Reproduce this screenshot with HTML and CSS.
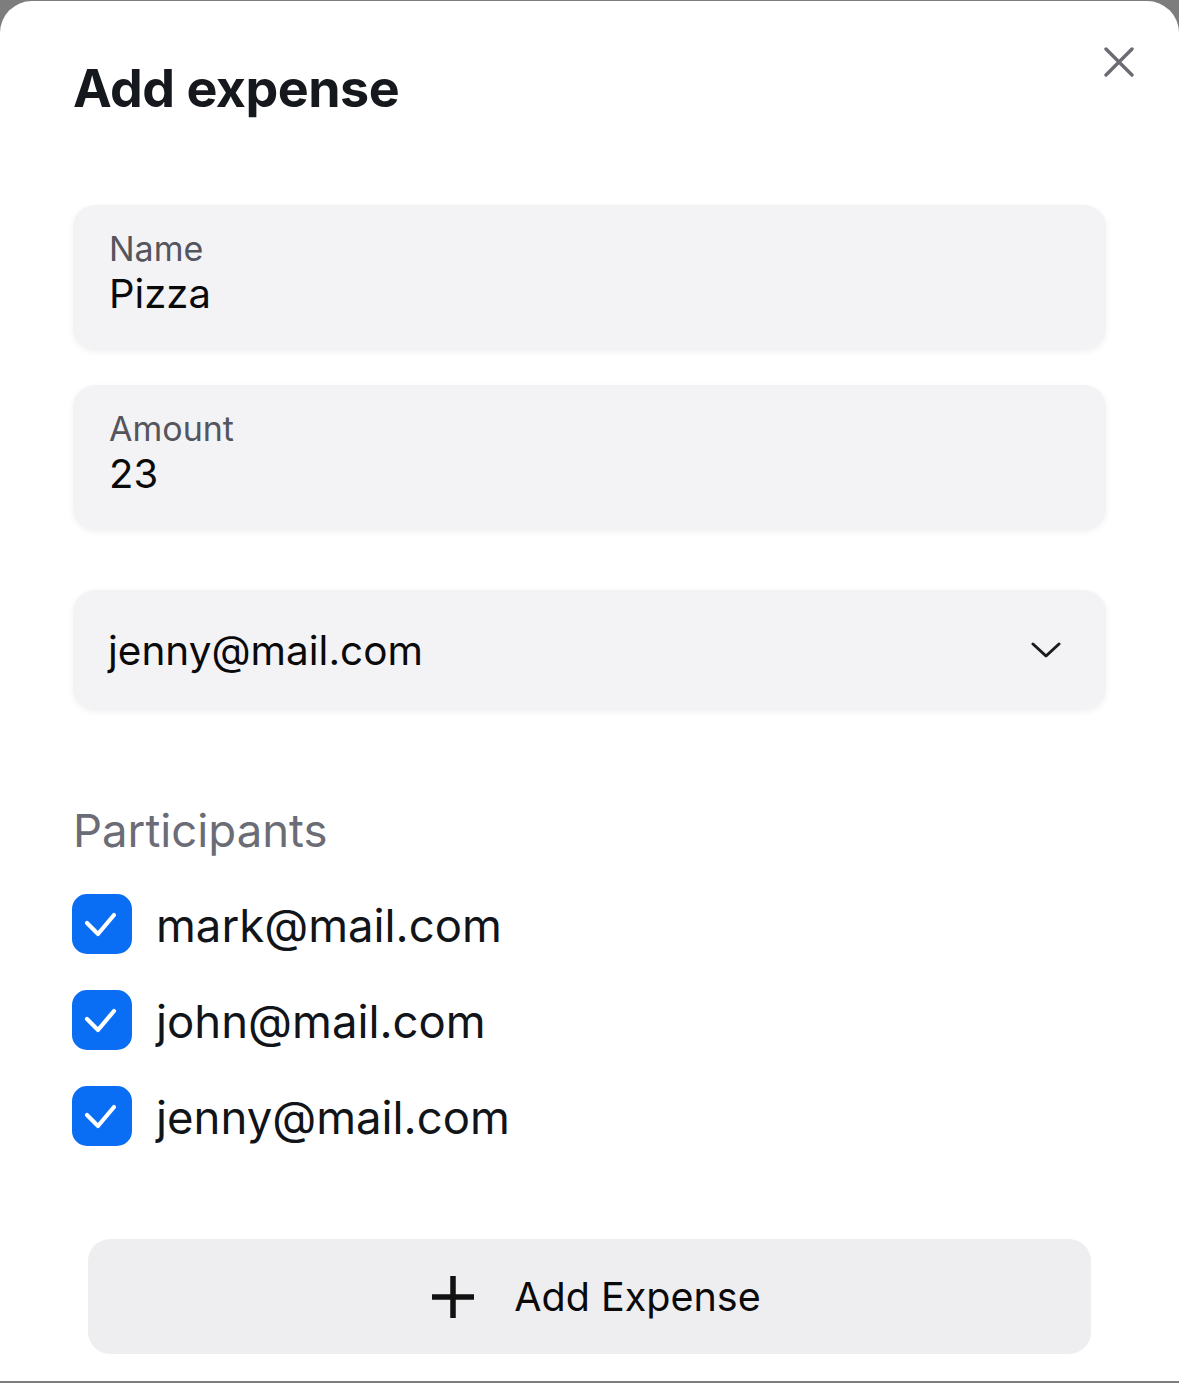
FILE: index.html
```html
<!DOCTYPE html>
<html lang="en">
<head>
    <meta charset="UTF-8" />
    <meta name="viewport" content="width=device-width, initial-scale=1.0" />
    <title>Add expense</title>
    <link rel="stylesheet" href="styles.css">
</head>
<body>
    <div class="sheet">
        <div class="sheet-header">
            <h1 class="title">Add expense</h1>
            <button class="close-btn" aria-label="Close">
                <svg width="30" height="30" viewBox="0 0 30 30">
                    <path d="M2 2 L28 28 M28 2 L2 28" stroke="#6b6b73" stroke-width="3.4" stroke-linecap="round" fill="none" />
                </svg>
            </button>
        </div>

        <div class="field">
            <span class="field-label">Name</span>
            <span class="field-value">Pizza</span>
        </div>

        <div class="field">
            <span class="field-label">Amount</span>
            <span class="field-value">23</span>
        </div>

        <div class="select">
            <span class="select-value">jenny@mail.com</span>
            <svg class="chevron" width="30" height="16" viewBox="0 0 30 16">
                <path d="M2 2 L15 14 L28 2" stroke="#1c1c1e" stroke-width="3" stroke-linecap="round" stroke-linejoin="round" fill="none" />
            </svg>
        </div>

        <div class="participants">
            <div class="section-title">Participants</div>

            <div class="check-row">
                <span class="checkbox">
                    <svg width="60" height="60" viewBox="0 0 60 60">
                        <path d="M15 29 L26 40 L42 21" stroke="#fff" stroke-width="4.2" stroke-linecap="round" stroke-linejoin="round" fill="none" />
                    </svg>
                </span>
                <span class="check-label">mark@mail.com</span>
            </div>

            <div class="check-row">
                <span class="checkbox">
                    <svg width="60" height="60" viewBox="0 0 60 60">
                        <path d="M15 29 L26 40 L42 21" stroke="#fff" stroke-width="4.2" stroke-linecap="round" stroke-linejoin="round" fill="none" />
                    </svg>
                </span>
                <span class="check-label">john@mail.com</span>
            </div>

            <div class="check-row">
                <span class="checkbox">
                    <svg width="60" height="60" viewBox="0 0 60 60">
                        <path d="M15 29 L26 40 L42 21" stroke="#fff" stroke-width="4.2" stroke-linecap="round" stroke-linejoin="round" fill="none" />
                    </svg>
                </span>
                <span class="check-label">jenny@mail.com</span>
            </div>
        </div>

        <button class="add-btn">
            <svg width="42" height="42" viewBox="0 0 42 42">
                <path d="M21 0 V42 M0 21 H42" stroke="#111" stroke-width="5.5" fill="none" />
            </svg>
            <span>Add Expense</span>
        </button>
    </div>
</body>
</html>
```

FILE: styles.css
```css
* {
    box-sizing: border-box;
}

body {
    margin: 0;
    padding: 0;
    font-family: 'Inter', 'Noto Sans', sans-serif;
    background-color: #7d7d7d;
    height: 1383px;
    overflow: hidden;
}

.sheet {
    margin-top: 1px;
    height: 1380px;
    background-color: #fff;
    border-radius: 32px 32px 0 0;
    padding: 0 73px 0 73px;
    display: flex;
    flex-direction: column;
}

.sheet-header {
    display: flex;
    justify-content: space-between;
    align-items: flex-start;
    padding-top: 62px;
    margin-right: -28px;
}

.title {
    margin: 0;
    font-size: 52px;
    line-height: 52px;
    font-weight: 700;
    letter-spacing: -0.01em;
    color: #15181c;
}

.close-btn {
    margin-top: -16px;
    padding: 0;
    border: none;
    background: none;
    width: 30px;
    height: 30px;
    cursor: pointer;
}

.close-btn svg {
    display: block;
}

.field {
    margin-top: 90px;
    height: 145px;
    background-color: #f3f3f6;
    border-radius: 22px;
    box-shadow: 0 2px 6px rgba(0, 0, 0, 0.06);
    padding: 27px 36px 0 36px;
    display: flex;
    flex-direction: column;
}

.field + .field {
    margin-top: 35px;
}

.field-label {
    font-size: 34px;
    line-height: 34px;
    color: #55555e;
}

.field-value {
    margin-top: 8px;
    font-size: 40px;
    line-height: 40px;
    color: #0a0a0a;
}

.select {
    margin-top: 60px;
    height: 120px;
    background-color: #f3f3f6;
    border-radius: 22px;
    box-shadow: 0 2px 6px rgba(0, 0, 0, 0.06);
    padding: 0 45px 0 35px;
    display: flex;
    align-items: center;
    justify-content: space-between;
}

.select-value {
    font-size: 40.5px;
    line-height: 41px;
    color: #0a0a0a;
}

.chevron {
    display: block;
}

.participants {
    margin-top: 98px;
    display: flex;
    flex-direction: column;
    gap: 36px;
}

.section-title {
    margin-bottom: 4px;
    font-size: 45.5px;
    line-height: 46px;
    color: #6c6c76;
}

.check-row {
    display: flex;
    align-items: center;
    gap: 24px;
    margin-left: -1px;
}

.checkbox {
    width: 60px;
    height: 60px;
    border-radius: 15px;
    background-color: #0a6ef4;
    flex-shrink: 0;
}

.checkbox svg {
    display: block;
}

.check-label {
    font-size: 45.5px;
    line-height: 46px;
    padding-top: 4px;
    color: #111418;
}

.add-btn {
    margin: 93px 15px 0 15px;
    height: 115px;
    border: none;
    border-radius: 22px;
    background-color: #eeeef0;
    display: flex;
    align-items: center;
    justify-content: center;
    gap: 40px;
    padding-left: 20px;
    font-family: 'Inter', 'Noto Sans', sans-serif;
    font-size: 39.5px;
    color: #0a0a0a;
    cursor: pointer;
}

.add-btn svg {
    display: block;
}
```
